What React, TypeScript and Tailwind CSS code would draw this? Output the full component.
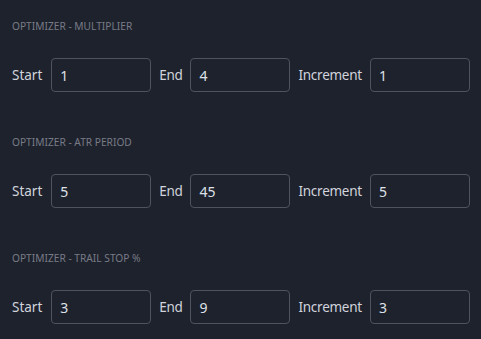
import React from "react";

const sections = [
  { title: "OPTIMIZER - MULTIPLIER", values: ["1", "4", "1"] },
  { title: "OPTIMIZER - ATR PERIOD", values: ["5", "45", "5"] },
  { title: "OPTIMIZER - TRAIL STOP %", values: ["3", "9", "3"] },
];

function Field({ value }: { value: string }) {
  return (
    <div className="w-[100px] shrink-0 h-[34px] rounded-[4px] border border-[#50535e] flex items-center px-[8px] text-[14px] text-[#dfe1e8]">
      {value}
    </div>
  );
}

export default function App() {
  return (
    <div
      className="w-[481px] h-[339px] bg-[#1e222d] pt-[18px] px-3 flex flex-col overflow-hidden"
      style={{ fontFamily: '"Noto Sans", "Open Sans", sans-serif' }}
    >
      {sections.map((s, i) => (
        <div key={i} className={i === 0 ? "flex flex-col" : "flex flex-col mt-[42px]"}>
          <div className="h-4 leading-4 text-[10.2px] text-[#787b86]">{s.title}</div>
          <div className="mt-6 flex items-center gap-2 text-[13.5px] text-[#d1d4dc]">
            <span className="shrink-0 mr-px">Start</span>
            <Field value={s.values[0]} />
            <span className="shrink-0 tracking-[-0.35px]">End</span>
            <Field value={s.values[1]} />
            <span className="shrink-0 tracking-[-0.25px]">Increment</span>
            <Field value={s.values[2]} />
          </div>
        </div>
      ))}
    </div>
  );
}
